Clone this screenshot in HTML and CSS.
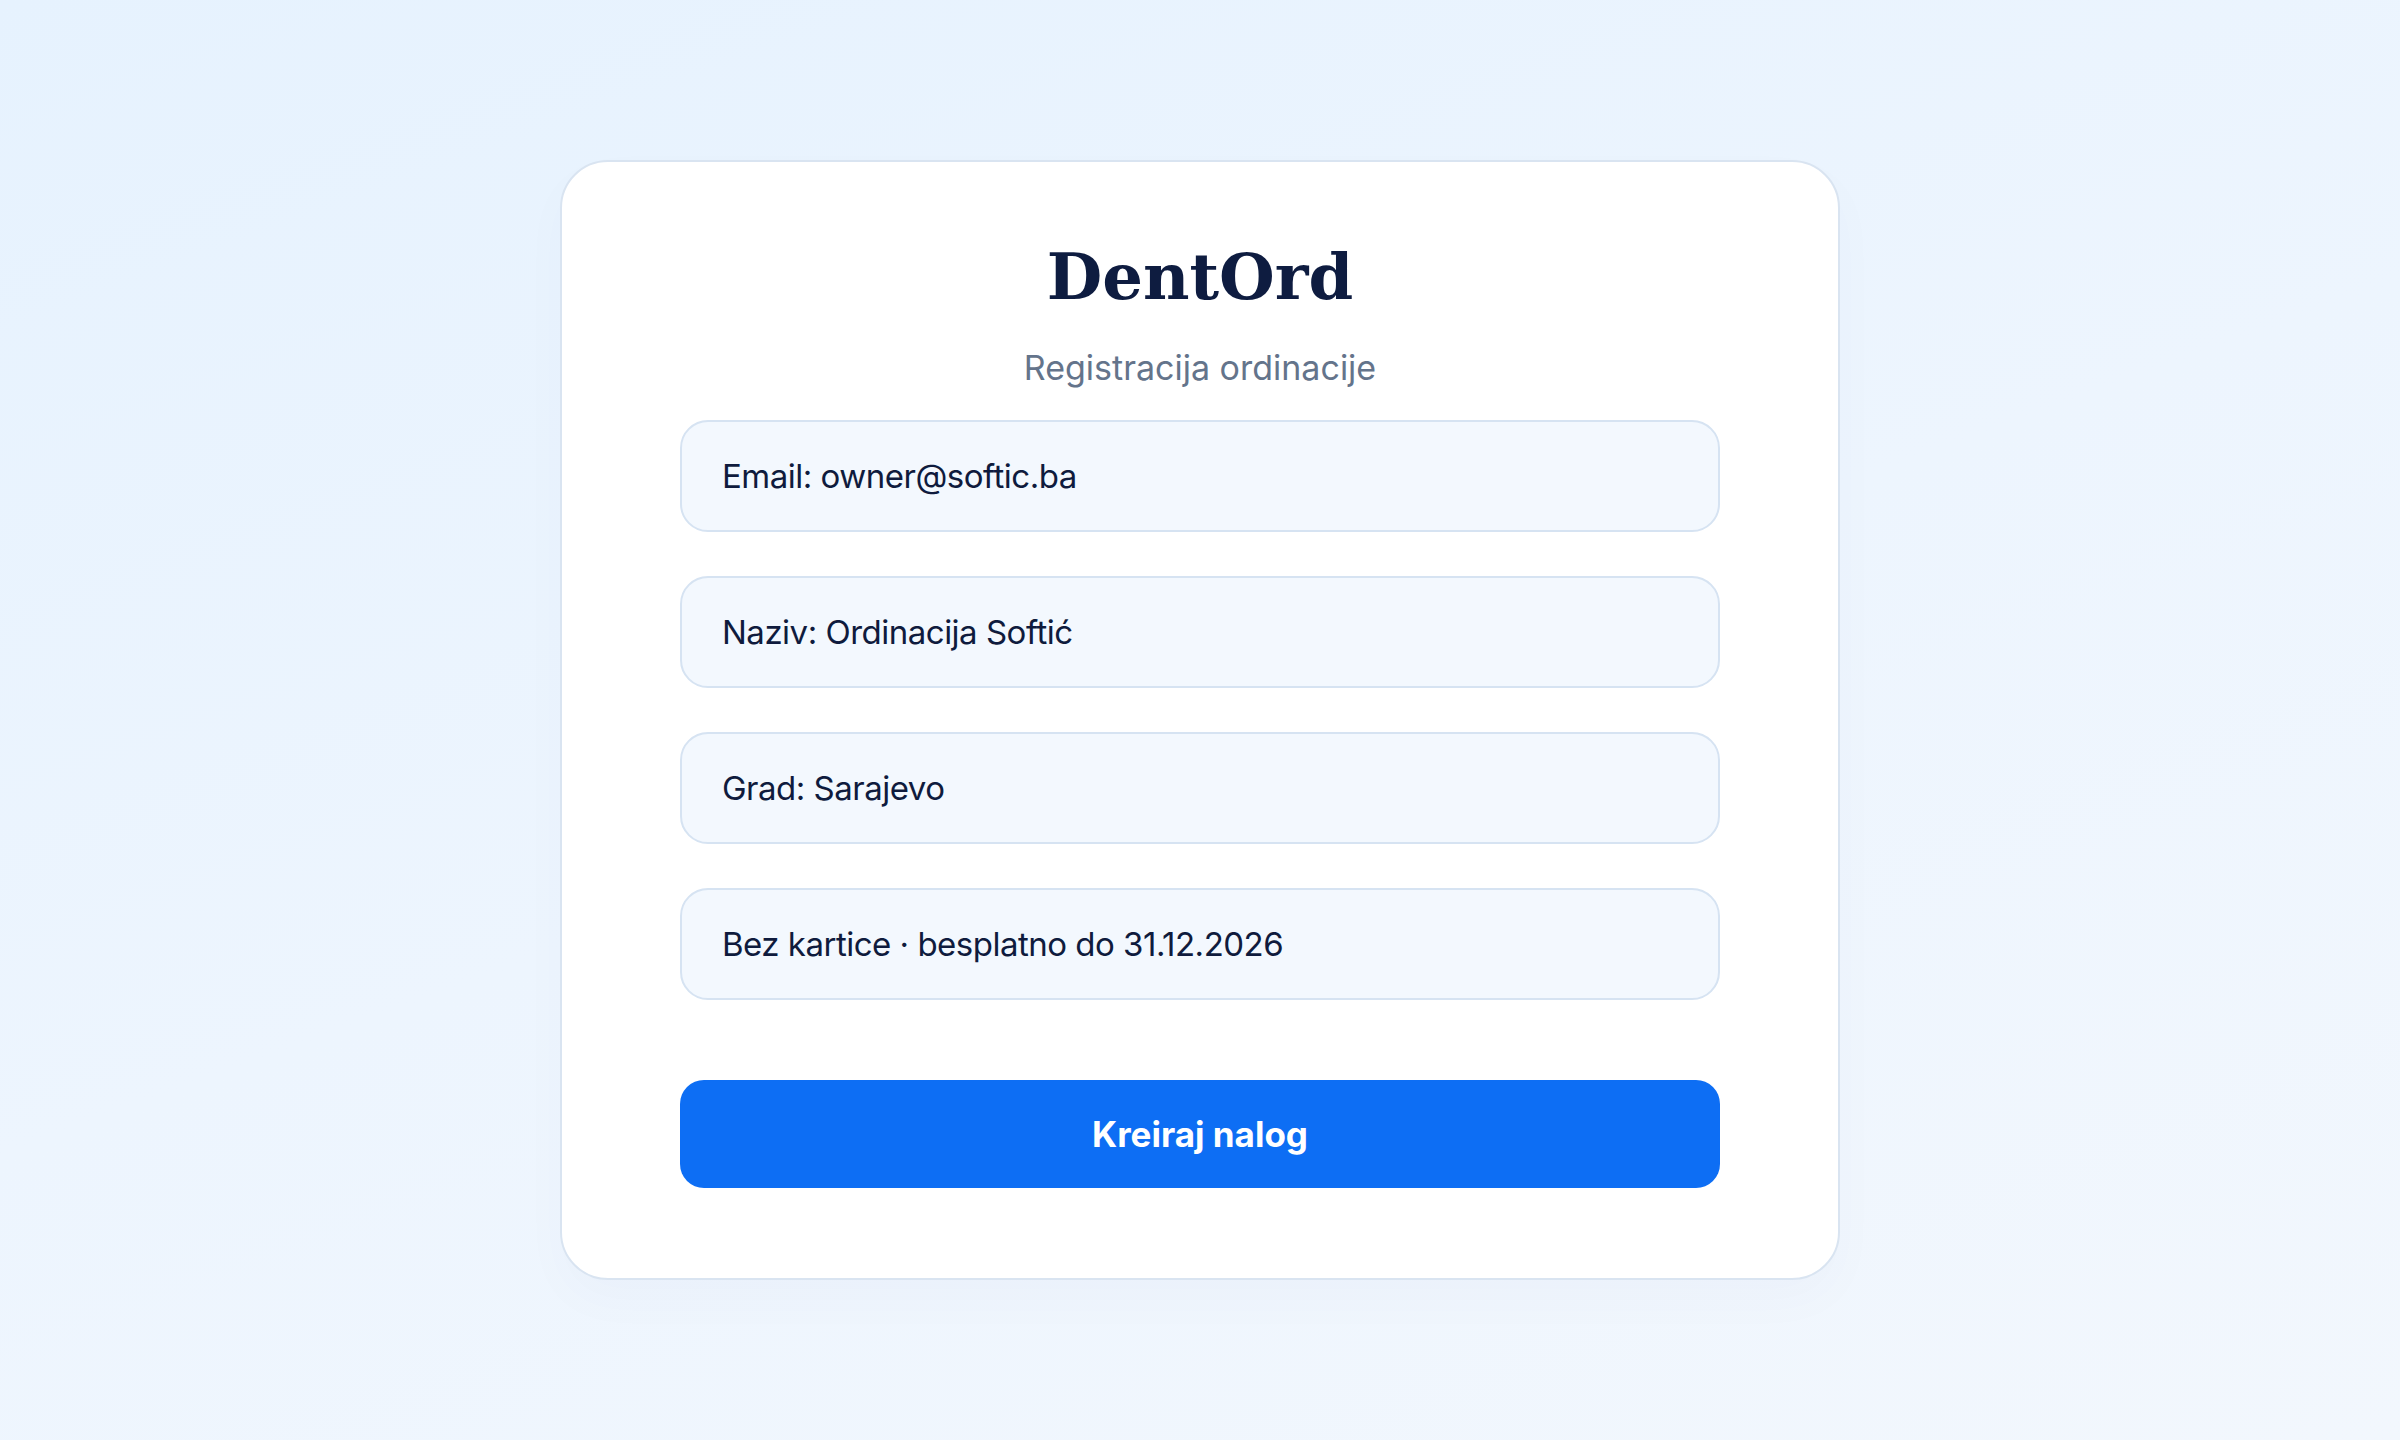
FILE: index.html
```html
<!DOCTYPE html>
<html lang="bs">
<head>
<meta charset="utf-8">
<title>DentOrd – Registracija ordinacije</title>
<link rel="stylesheet" href="styles.css">
</head>
<body>
<main class="page">
  <section class="card">
    <h1 class="brand">DentOrd</h1>
    <p class="subtitle">Registracija ordinacije</p>
    <div class="fields">
      <div class="field">Email: owner@softic.ba</div>
      <div class="field">Naziv: Ordinacija Softić</div>
      <div class="field">Grad: Sarajevo</div>
      <div class="field">Bez kartice · besplatno do 31.12.2026</div>
    </div>
    <button class="submit" type="button">Kreiraj nalog</button>
  </section>
</main>
</body>
</html>
```
FILE: styles.css
```css
* { box-sizing: border-box; }
html, body { margin: 0; padding: 0; }
body {
  min-height: 1440px;
  background: linear-gradient(160deg, #e6f2fe 0%, #edf5fe 50%, #f2f7fd 100%);
  font-family: Inter, "Noto Sans", sans-serif;
  color: #0f1b3d;
}
.page {
  display: flex;
  justify-content: center;
  padding-top: 160px;
}
.card {
  width: 1280px;
  background: #ffffff;
  border: 2px solid #d9e4f1;
  border-radius: 48px;
  padding: 77px 118px 90px;
  display: flex;
  flex-direction: column;
  box-shadow: 0 20px 50px rgba(20, 60, 120, 0.025);
}
.brand {
  margin: 0;
  text-align: center;
  font-family: "DejaVu Serif", "Liberation Serif", serif;
  font-weight: 700;
  font-size: 64px;
  line-height: 76px;
  letter-spacing: 0;
  color: #0e1c40;
}
.subtitle {
  margin: 29px 0 0;
  text-align: center;
  font-size: 34px;
  line-height: 48px;
  color: #64748b;
}
.fields {
  margin-top: 28px;
  display: flex;
  flex-direction: column;
  gap: 44px;
}
.field {
  height: 112px;
  display: flex;
  align-items: center;
  padding: 0 40px;
  background: #f3f8fe;
  border: 2px solid #d6e3f2;
  border-radius: 28px;
  font-size: 33px;
  letter-spacing: -0.5px;
  color: #0f1b3d;
}
.submit {
  margin-top: 80px;
  height: 108px;
  border: none;
  border-radius: 24px;
  background: #0d6ef4;
  color: #ffffff;
  font-family: Inter, "Noto Sans", sans-serif;
  font-weight: 700;
  font-size: 35px;
  cursor: pointer;
}
```
